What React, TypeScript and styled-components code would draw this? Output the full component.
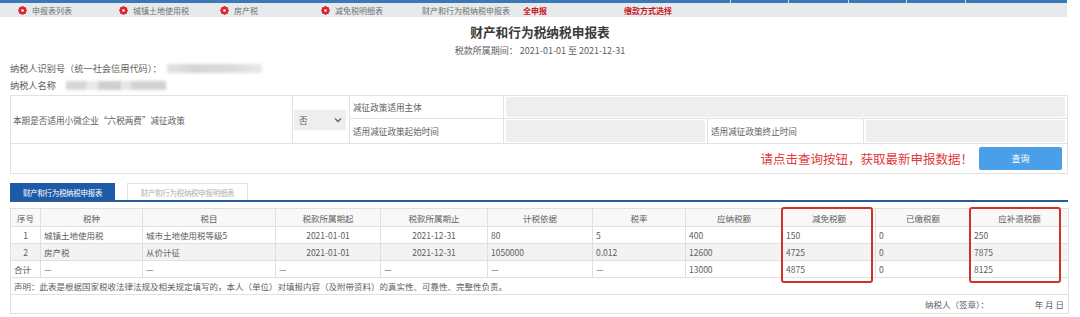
import styled, { createGlobalStyle } from "styled-components";

const GlobalStyle = createGlobalStyle`
  html, body { margin: 0; padding: 0; background: #fff; }
  body {
    font-family: "Noto Sans CJK SC", "Noto Sans", sans-serif;
    font-size: 9px;
    color: #606060;
  }
`;

const navItems = [
  { label: "申报表列表", icon: true },
  { label: "城镇土地使用税", icon: true },
  { label: "房产税", icon: true },
  { label: "减免税明细表", icon: true },
  { label: "财产和行为税纳税申报表", icon: false },
  { label: "全申报", icon: false, alert: true },
  { label: "缴款方式选择", icon: false, alert: true },
];

const columns = [
  { title: "序号", width: 30 },
  { title: "税种", width: 102 },
  { title: "税目", width: 133 },
  { title: "税款所属期起", width: 105 },
  { title: "税款所属期止", width: 107 },
  { title: "计税依据", width: 105 },
  { title: "税率", width: 93 },
  { title: "应纳税额", width: 97 },
  { title: "减免税额", width: 93 },
  { title: "已缴税额", width: 95 },
  { title: "应补退税额", width: 98 },
];

const rows = [
  ["1", "城镇土地使用税", "城市土地使用税等级5", "2021-01-01", "2021-12-31", "80", "5", "400", "150", "0", "250"],
  ["2", "房产税", "从价计征", "2021-01-01", "2021-12-31", "1050000", "0.012", "12600", "4725", "0", "7875"],
  ["合计", "—", "—", "—", "—", "—", "—", "13000", "4875", "0", "8125"],
];

const centered = [0, 3, 4];

const NavIcon = () => (
  <svg width="9" height="9" viewBox="0 0 10 10">
    <g fill="#d8262c">
      {[0, 45, 90, 135, 180, 225, 270, 315].map((a) => (
        <circle key={a} cx={5 + 3.4 * Math.cos((a * Math.PI) / 180)} cy={5 + 3.4 * Math.sin((a * Math.PI) / 180)} r="1.5" />
      ))}
      <circle cx="5" cy="5" r="3.6" />
    </g>
    <circle cx="5" cy="5" r="1.4" fill="#fff" />
  </svg>
);

const Chevron = () => (
  <svg width="8" height="6" viewBox="0 0 8 6">
    <path d="M1 1.5 L4 4.5 L7 1.5" fill="none" stroke="#666" strokeWidth="1.4" />
  </svg>
);

export default function App() {
  return (
    <Page>
      <GlobalStyle />
      <TopStrip>
        <StripCell $w={730} />
        <StripCell $w={58} $sep />
        <StripCell $w={60} $sep />
        <StripCell $w={58} $sep />
        <StripCell $w={59} $sep />
        <StripCell $w={102} $sep />
      </TopStrip>
      <NavBar>
        {navItems.map((item) => (
          <NavItem key={item.label} $alert={item.alert}>
            {item.icon && <NavIcon />}
            {item.label}
          </NavItem>
        ))}
      </NavBar>

      <Title>财产和行为税纳税申报表</Title>
      <Period>税款所属期间： 2021-01-01 至 2021-12-31</Period>

      <Content>
        <InfoLine>
          纳税人识别号（统一社会信用代码）：
          <Blurred $w={95} />
        </InfoLine>
        <InfoLine $gap={10}>
          纳税人名称
          <Blurred $w={100} $patchy />
        </InfoLine>

        <FormGrid>
          <PolicyLabel>本期是否适用小微企业“六税两费”减征政策</PolicyLabel>
          <SelectCell>
            <SelectBox>
              否
              <Chevron />
            </SelectBox>
          </SelectCell>
          <FormLabel>减征政策适用主体</FormLabel>
          <InputCell $span={3}>
            <GrayInput />
          </InputCell>
          <FormLabel>适用减征政策起始时间</FormLabel>
          <InputCell>
            <GrayInput />
          </InputCell>
          <FormLabel>适用减征政策终止时间</FormLabel>
          <InputCell>
            <GrayInput />
          </InputCell>
          <ActionRow>
            <Notice>请点击查询按钮，获取最新申报数据！</Notice>
            <QueryButton>查询</QueryButton>
          </ActionRow>
        </FormGrid>

        <Tabs>
          <Tab $active>财产和行为税纳税申报表</Tab>
          <Tab>财产和行为税纳税申报明细表</Tab>
        </Tabs>

        <TableWrap>
          <Table>
            <colgroup>
              {columns.map((c) => (
                <col key={c.title} style={{ width: c.width }} />
              ))}
            </colgroup>
            <thead>
              <tr>
                {columns.map((c) => (
                  <Th key={c.title}>{c.title}</Th>
                ))}
              </tr>
            </thead>
            <tbody>
              {rows.map((r, i) => (
                <Row key={i} $striped={i === 1}>
                  {r.map((v, j) => (
                    <Td key={j} $center={centered.includes(j) && i < 2}>
                      {v}
                    </Td>
                  ))}
                </Row>
              ))}
              <Row>
                <Td colSpan={11}>声明：此表是根据国家税收法律法规及相关规定填写的，本人（单位）对填报内容（及附带资料）的真实性、可靠性、完整性负责。</Td>
              </Row>
              <Row $tall>
                <SignCell colSpan={11}>
                  <span>纳税人（签章）：</span>
                  <span>年 月 日</span>
                </SignCell>
              </Row>
            </tbody>
          </Table>
          <Highlight $left={771} />
          <Highlight $left={959} />
        </TableWrap>
      </Content>
    </Page>
  );
}

const Page = styled.div`
  width: 1080px;
  overflow: hidden;
`;

const TopStrip = styled.div`
  display: flex;
  height: 3px;
  width: 1067px;
  background: #3b78b6;
`;

const StripCell = styled.div<{ $w: number; $sep?: boolean }>`
  width: ${(p) => p.$w}px;
  box-sizing: border-box;
  border-left: ${(p) => (p.$sep ? "1px solid #cfe0f0" : "none")};
`;

const NavBar = styled.div`
  display: flex;
  align-items: center;
  height: 14px;
  width: 1067px;
  padding-left: 18px;
  box-sizing: border-box;
  background: #e7e9ed;
`;

const NavItem = styled.div<{ $alert?: boolean }>`
  display: flex;
  align-items: center;
  gap: 5px;
  width: 101px;
  font-size: 8px;
  color: ${(p) => (p.$alert ? "#c8161d" : "#707070")};
  font-weight: ${(p) => (p.$alert ? "bold" : "normal")};
  white-space: nowrap;
`;

const Title = styled.div`
  margin-top: 6px;
  line-height: 18px;
  text-align: center;
  font-size: 12.7px;
  font-weight: bold;
  color: #3a3a3a;
`;

const Period = styled.div`
  margin-top: 4px;
  line-height: 12px;
  text-align: center;
  font-size: 9px;
`;

const Content = styled.div`
  margin-left: 10px;
  width: 1058px;
`;

const InfoLine = styled.div<{ $gap?: number }>`
  display: flex;
  align-items: center;
  gap: ${(p) => p.$gap ?? 5}px;
  margin-top: 5px;
  height: 12px;
  font-size: 9.2px;
`;

const Blurred = styled.div<{ $w: number; $patchy?: boolean }>`
  width: ${(p) => p.$w}px;
  height: 9px;
  background: ${(p) =>
    p.$patchy
      ? "linear-gradient(90deg, #d6d6d6 0 20%, #eaeaea 20% 32%, #cfcfcf 32% 55%, #e6e6e6 55% 65%, #d2d2d2 65% 100%)"
      : "linear-gradient(90deg, #e2e2e2, #d4d4d4 30%, #dcdcdc 70%, #e8e8e8)"};
  filter: blur(1.5px);
`;

const FormGrid = styled.div`
  display: grid;
  grid-template-columns: 282px 57px 154px 204px 156px 1fr;
  grid-template-rows: 23px 25px 30px;
  margin-top: 4px;
  border-top: 1px solid #e2e2e2;
  border-left: 1px solid #e2e2e2;
  box-sizing: border-box;
  width: 1058px;
`;

const Cell = styled.div`
  display: flex;
  align-items: center;
  border-right: 1px solid #e2e2e2;
  border-bottom: 1px solid #e2e2e2;
  box-sizing: border-box;
`;

const PolicyLabel = styled(Cell)`
  grid-row: 1 / span 2;
  padding-left: 2px;
  font-size: 8.6px;
`;

const SelectCell = styled(Cell)`
  grid-row: 1 / span 2;
  padding-left: 1px;
`;

const SelectBox = styled.div`
  display: flex;
  align-items: center;
  justify-content: space-between;
  width: 52px;
  height: 20px;
  padding: 0 4px 0 5px;
  box-sizing: border-box;
  background: #eeeeee;
  border-radius: 2px;
  font-size: 8.6px;
`;

const FormLabel = styled(Cell)`
  padding-left: 3px;
  font-size: 8.6px;
`;

const InputCell = styled(Cell)<{ $span?: number }>`
  grid-column: span ${(p) => p.$span ?? 1};
  padding: 1px 2px;
  align-items: stretch;
`;

const GrayInput = styled.div`
  flex: 1;
  background: #eeeeee;
  border-radius: 2px;
`;

const ActionRow = styled(Cell)`
  grid-column: 1 / -1;
  justify-content: flex-end;
  gap: 6px;
  padding-right: 5px;
`;

const Notice = styled.span`
  font-size: 12.5px;
  color: #e3393b;
`;

const QueryButton = styled.div`
  display: flex;
  align-items: center;
  justify-content: center;
  width: 83px;
  height: 23px;
  background: #4a9fe8;
  border-radius: 2px;
  color: #fff;
  font-size: 9px;
`;

const Tabs = styled.div`
  display: flex;
  gap: 12px;
  margin-top: 9px;
  height: 17px;
  border-bottom: 2px solid #2b5b97;
`;

const Tab = styled.div<{ $active?: boolean }>`
  display: flex;
  align-items: center;
  justify-content: center;
  width: ${(p) => (p.$active ? 105 : 121)}px;
  box-sizing: border-box;
  background: ${(p) => (p.$active ? "#1e5aa7" : "#fff")};
  border: 1px solid ${(p) => (p.$active ? "#1e5aa7" : "#e2e2e2")};
  border-bottom: none;
  color: ${(p) => (p.$active ? "#fff" : "#b0b0b0")};
  font-size: 7.5px;
  letter-spacing: -0.3px;
`;

const TableWrap = styled.div`
  position: relative;
  margin-top: 6px;
`;

const Table = styled.table`
  width: 1058px;
  border-collapse: collapse;
  table-layout: fixed;
  font-size: 8.5px;
`;

const Th = styled.th`
  height: 17px;
  padding: 0;
  border: 1px solid #e0e0e0;
  background: #f8f8f8;
  font-weight: normal;
  text-align: center;
`;

const Row = styled.tr<{ $striped?: boolean; $tall?: boolean }>`
  height: ${(p) => (p.$tall ? 19 : 17)}px;
  background: ${(p) => (p.$striped ? "#f3f3f3" : "#fff")};
`;

const Td = styled.td<{ $center?: boolean }>`
  padding: 0 3px;
  border: 1px solid #e0e0e0;
  text-align: ${(p) => (p.$center ? "center" : "left")};
  white-space: nowrap;
  overflow: hidden;
`;

const SignCell = styled(Td)`
  text-align: right;
  padding-right: 4px;

  span + span {
    margin-left: 46px;
  }
`;

const Highlight = styled.div<{ $left: number }>`
  position: absolute;
  left: ${(p) => p.$left}px;
  top: -1px;
  width: 92px;
  height: 76px;
  border: 2px solid #d1312c;
  border-radius: 3px;
  box-sizing: border-box;
  pointer-events: none;
`;
